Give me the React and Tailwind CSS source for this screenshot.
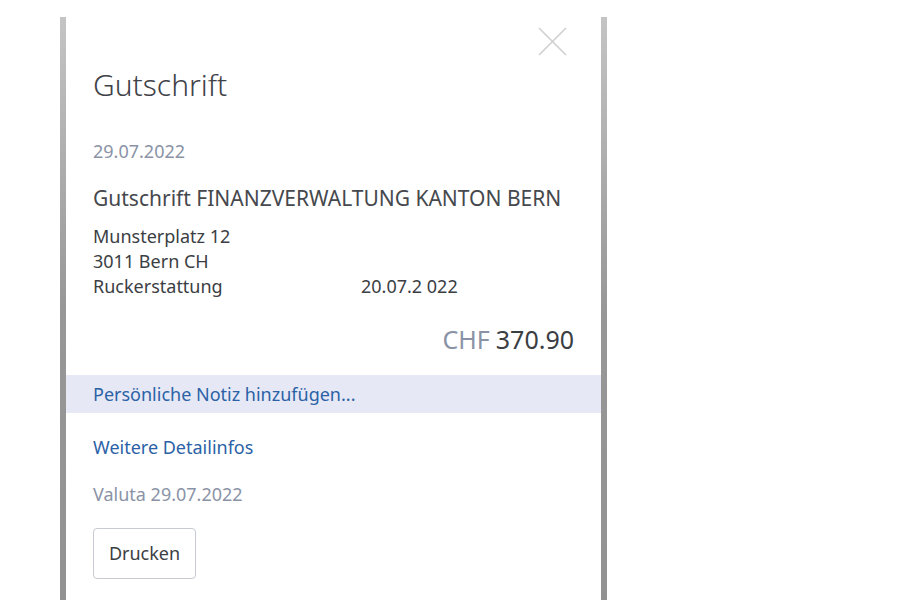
export default function App() {
  return (
    <div className="w-[900px] h-[600px] bg-white overflow-hidden" style={{ fontFamily: '"Noto Sans", "Open Sans", sans-serif' }}>
      <div className="ml-[60px] mt-[17px] w-[547px] h-[583px] flex">
        <div className="w-[6px] h-full bg-gradient-to-b from-[#c4c4c4] via-[#979797] to-[#929292]" />
        <div className="flex-1 flex flex-col bg-white">
          <div className="flex justify-end pr-[34px] pt-[10px]">
            <svg width="29" height="29" viewBox="0 0 29 29">
              <path d="M1 1 L28 28 M28 1 L1 28" stroke="#cfcfcf" strokeWidth="1.6" fill="none" />
            </svg>
          </div>
          <div className="px-[27px]">
            <div className="mt-[9px] text-[30px] font-light leading-[40px] text-[#3f4248]">Gutschrift</div>
            <div className="mt-[34px] text-[18px] leading-[24px] text-[#8a93a6]">29.07.2022</div>
            <div className="mt-[22px] text-[21px] leading-[26px] text-[#45484d] whitespace-nowrap">Gutschrift FINANZVERWALTUNG KANTON BERN</div>
            <div className="mt-[13px] text-[18px] leading-[25px] text-[#3b3e43]">
              <div>Munsterplatz 12</div>
              <div>3011 Bern CH</div>
              <div className="flex">
                <span className="w-[268px]">Ruckerstattung</span>
                <span>20.07.2 022</span>
              </div>
            </div>
            <div className="mt-[24px] flex justify-end items-baseline gap-[6px] text-[25px] leading-[32px]">
              <span className="text-[#8a93a6]">CHF</span>
              <span className="text-[#3b3e43]">370.90</span>
            </div>
          </div>
          <div className="mt-[20px] h-[38px] bg-[#e6e9f5] px-[27px] flex items-center text-[18px] text-[#2b62a6]">Persönliche Notiz hinzufügen...</div>
          <div className="px-[27px]">
            <div className="mt-[22px] text-[18px] leading-[24px] text-[#2b62a6]">Weitere Detailinfos</div>
            <div className="mt-[23px] text-[18px] leading-[24px] text-[#8a93a6]">Valuta 29.07.2022</div>
            <button className="mt-[22px] w-[103px] h-[51px] border border-[#c7cad3] rounded-[4px] text-[18px] text-[#3b3e43] bg-white">Drucken</button>
          </div>
        </div>
        <div className="w-[6px] h-full bg-gradient-to-b from-[#c4c4c4] via-[#979797] to-[#929292]" />
      </div>
    </div>
  );
}
